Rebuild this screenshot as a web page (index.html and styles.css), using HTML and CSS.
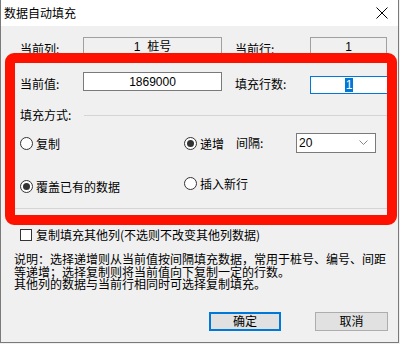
FILE: index.html
```html
<!DOCTYPE html>
<html lang="zh-CN">
<head>
<meta charset="utf-8"/>
<meta content="width=device-width, initial-scale=1.0" name="viewport"/>
<title>数据自动填充</title>
<link rel="stylesheet" href="styles.css">
</head>
<body>
<div class="window">
<div class="titlebar">
<span class="title">数据自动填充</span>
<svg class="close" width="12" height="12" viewBox="0 0 12 12"><path d="M0.5 0.5 L11.5 11.5 M11.5 0.5 L0.5 11.5" stroke="#000" stroke-width="1" fill="none"/></svg>
</div>
<div class="content">
<div class="row row-cur">
<span class="label">当前列:</span>
<div class="field field-ro wide">1&nbsp;&nbsp;桩号</div>
<span class="label label-right">当前行:</span>
<div class="field field-ro narrow">1</div>
</div>
<div class="row row-val">
<span class="label">当前值:</span>
<div class="field wide">1869000</div>
<span class="label label-right">填充行数:</span>
<div class="field field-focus narrow"><span class="sel">1</span></div>
</div>
<div class="group-head">
<span class="label-plain">填充方式:</span>
<div class="line"></div>
</div>
<div class="row radio-row">
<label class="radio first"><span class="dot"></span>复制</label>
<label class="radio second"><span class="dot on"></span>递增</label>
<span class="label-gap">间隔:</span>
<div class="combo"><span>20</span><svg width="9" height="6" viewBox="0 0 9 6"><path d="M0.5 0.5 L4.5 4.5 L8.5 0.5" stroke="#888" stroke-width="1" fill="none"/></svg></div>
</div>
<div class="row radio-row2">
<label class="radio first low"><span class="dot on"></span>覆盖已有的数据</label>
<label class="radio"><span class="dot"></span>插入新行</label>
</div>
<div class="separator"></div>
<label class="check"><span class="box"></span>复制填充其他列(不选则不改变其他列数据)</label>
<div class="note">
<div class="note-line">说明：选择递增则从当前值按间隔填充数据，常用于桩号、编号、间距</div>
<div class="note-line">等递增；选择复制则将当前值向下复制一定的行数。</div>
<div class="note-line">其他列的数据与当前行相同时可选择复制填充。</div>
</div>
<div class="buttons">
<button class="btn btn-default">确定</button>
<button class="btn">取消</button>
</div>
</div>
<div class="highlight"></div>
</div>
</body>
</html>
```

FILE: styles.css
```css
body {
    margin: 0;
    background: #f0f0f0;
    font-family: "Noto Sans CJK SC", "Liberation Sans", sans-serif;
    font-size: 12px;
    color: #000;
}
.window {
    position: relative;
    width: 399px;
    height: 343px;
    box-sizing: border-box;
    border-left: 1px solid #7a7a7a;
    border-right: 1px solid #7a7a7a;
    border-bottom: 1px solid #7a7a7a;
    background: #f0f0f0;
}
.titlebar {
    height: 26px;
    background: #fff;
    display: flex;
    align-items: center;
    justify-content: space-between;
    padding: 0 10px 0 3px;
}
.title {
    line-height: 14px;
}
.close {
    display: block;
}
.content {
    padding: 0 10px 0 19px;
}
.row {
    display: flex;
    align-items: flex-start;
}
.row-cur {
    margin-top: 11px;
}
.row-val {
    margin-top: 16px;
}
.label {
    width: 63px;
    margin-top: 5px;
    line-height: 14px;
}
.label-right {
    margin-left: 13px;
    width: 75px;
}
.field {
    height: 19px;
    box-sizing: border-box;
    border: 1px solid #7a7a7a;
    background: #fff;
    display: flex;
    align-items: center;
    justify-content: center;
    font-family: "Liberation Sans", "Noto Sans CJK SC", sans-serif;
    line-height: 14px;
}
.field-ro {
    background: #f0f0f0;
    border-color: #a0a0a0;
}
.wide {
    width: 139px;
}
.narrow {
    width: 77px;
}
.field-focus {
    width: 78px;
    height: 18px;
    margin-top: 4px;
    border-color: #0078d7;
}
.sel {
    background: #0078d7;
    color: #fff;
    padding: 0 1px;
}
.group-head {
    display: flex;
    align-items: center;
    margin-top: 14px;
    height: 14px;
}
.label-plain {
    width: 64px;
    line-height: 14px;
}
.line {
    flex: 1;
    height: 1px;
    background: #d5d5d5;
}
.radio-row {
    margin-top: 11px;
    height: 20px;
    align-items: center;
}
.radio-row2 {
    margin-top: 24px;
    height: 16px;
}
.radio {
    display: flex;
    align-items: center;
    gap: 3px;
    line-height: 13px;
    white-space: nowrap;
}
.first {
    width: 164px;
}
.second {
    width: 52px;
}
.low {
    margin-top: 3px;
}
.dot {
    flex: none;
    width: 13px;
    height: 13px;
    box-sizing: border-box;
    border: 1px solid #333;
    border-radius: 50%;
    background: #fff;
    display: flex;
    align-items: center;
    justify-content: center;
}
.dot.on::after {
    content: "";
    width: 7px;
    height: 7px;
    border-radius: 50%;
    background: #333;
}
.label-gap {
    width: 60px;
    line-height: 14px;
}
.combo {
    width: 80px;
    height: 20px;
    box-sizing: border-box;
    border: 1px solid #7a7a7a;
    background: #fff;
    display: flex;
    align-items: center;
    justify-content: space-between;
    padding: 0 7px 0 2px;
    font-family: "Liberation Sans", sans-serif;
}
.separator {
    margin: 15px -1px 0 -7px;
    height: 1px;
    background: #d5d5d5;
}
.check {
    display: flex;
    align-items: center;
    gap: 4px;
    margin-top: 19px;
    line-height: 13px;
}
.box {
    width: 12px;
    height: 12px;
    box-sizing: border-box;
    border: 1px solid #333;
    background: #fff;
}
.note {
    margin: 13px 0 0 -6px;
    font-family: "Liberation Sans", "Noto Sans CJK SC", sans-serif;
    white-space: nowrap;
}
.note-line {
    height: 12.5px;
    line-height: 12.5px;
}
.buttons {
    display: flex;
    justify-content: flex-end;
    gap: 34px;
    margin-top: 20px;
}
.btn {
    width: 73px;
    height: 19px;
    box-sizing: border-box;
    border: 1px solid #adadad;
    background: #e1e1e1;
    font-family: "Noto Sans CJK SC", sans-serif;
    font-size: 12px;
    line-height: 14px;
    padding: 0;
    color: #000;
}
.btn-default {
    width: 72px;
    border: 2px solid #0078d7;
}
.highlight {
    position: absolute;
    left: 4px;
    top: 53px;
    width: 392px;
    height: 172px;
    box-sizing: border-box;
    border: 10px solid #ff1100;
    border-radius: 9px;
}
```
